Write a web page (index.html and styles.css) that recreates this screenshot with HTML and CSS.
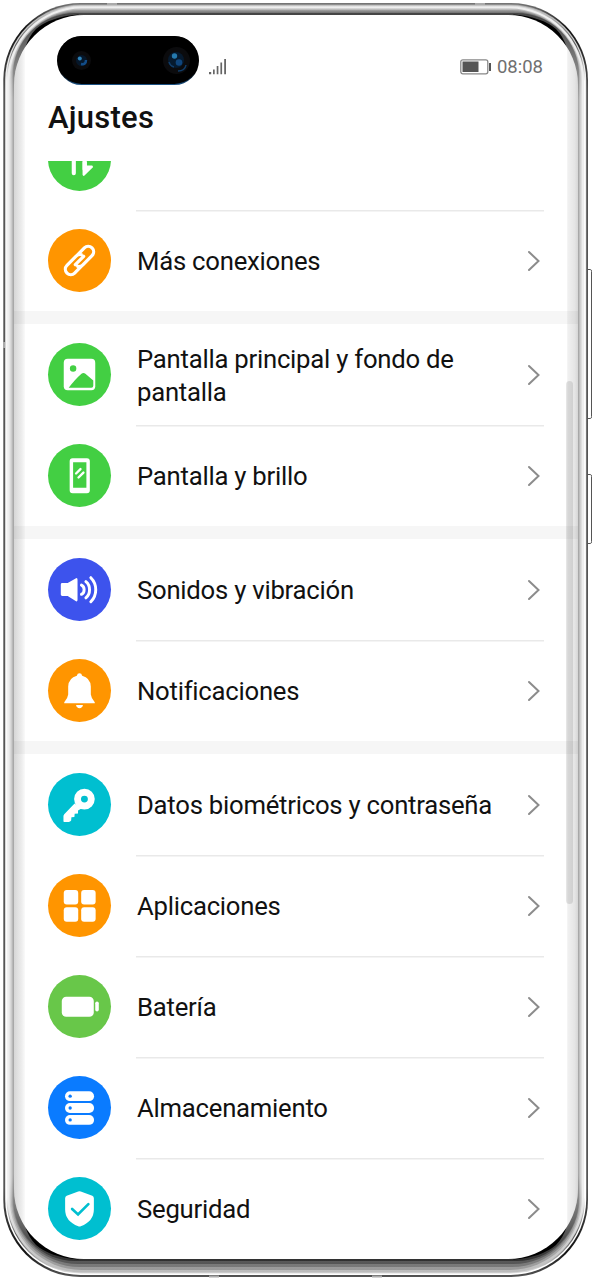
FILE: index.html
```html
<!DOCTYPE html>
<html lang="es">
<head>
<meta charset="utf-8">
<title>Ajustes</title>
<link rel="stylesheet" href="styles.css">
</head>
<body>
<main class="phone">
  <svg class="chassis" viewBox="0 0 592 1280" aria-hidden="true">
    <defs>
      <linearGradient id="m0" x2="0" y2="1"><stop offset="0" stop-color="#777"/><stop offset=".02" stop-color="#111"/><stop offset=".07" stop-color="#555"/><stop offset=".93" stop-color="#555"/><stop offset=".98" stop-color="#111"/><stop offset="1" stop-color="#555"/></linearGradient>
      <linearGradient id="m1" x2="0" y2="1"><stop offset="0" stop-color="#aaa"/><stop offset=".05" stop-color="#eee"/><stop offset=".96" stop-color="#fff"/><stop offset="1" stop-color="#fff"/></linearGradient>
      <linearGradient id="m2" x2="0" y2="1"><stop offset="0" stop-color="#ddd"/><stop offset=".03" stop-color="#555"/><stop offset=".06" stop-color="#fff"/><stop offset=".94" stop-color="#fff"/><stop offset=".97" stop-color="#555"/><stop offset="1" stop-color="#ddd"/></linearGradient>
      <linearGradient id="m3" x2="0" y2="1"><stop offset="0" stop-color="#eee"/><stop offset=".06" stop-color="#eee"/><stop offset=".94" stop-color="#eee"/><stop offset="1" stop-color="#bbb"/></linearGradient>
      <linearGradient id="m4" x2="0" y2="1"><stop offset="0" stop-color="#bbb"/><stop offset=".07" stop-color="#dedede"/><stop offset=".93" stop-color="#dedede"/><stop offset="1" stop-color="#999"/></linearGradient>
      <linearGradient id="m5" x2="0" y2="1"><stop offset="0" stop-color="#999"/><stop offset=".07" stop-color="#ccc"/><stop offset=".93" stop-color="#ccc"/><stop offset="1" stop-color="#777"/></linearGradient>
      <linearGradient id="m6" x2="0" y2="1"><stop offset="0" stop-color="#777"/><stop offset=".07" stop-color="#b8b8b8"/><stop offset=".93" stop-color="#b8b8b8"/><stop offset="1" stop-color="#555"/></linearGradient>
      <linearGradient id="m7" x2="0" y2="1"><stop offset="0" stop-color="#444"/><stop offset=".07" stop-color="#a8a8a8"/><stop offset=".93" stop-color="#a8a8a8"/><stop offset="1" stop-color="#303030"/></linearGradient>
    </defs>
    <g fill="#fff" stroke="#555"><path d="M587.5 269.5h3q1 0 1 2v145q0 2-1 2h-3zM587.5 474.500h3q1 0 1 2v65q0 2-1 2h-3z"/></g>
    <rect x="3.300" y="3" width="584.700" height="1274" rx="77" fill="url(#m0)"/>
    <rect x="5.200" y="4.500" width="581" height="1270.500" rx="75.500" fill="url(#m1)"/>
    <rect x="6.500" y="5.500" width="578.500" height="1268" rx="74.500" fill="url(#m2)"/>
    <rect x="7.200" y="6.500" width="577" height="1266" rx="74" fill="url(#m3)"/>
    <rect x="9.500" y="8.500" width="572.500" height="1261.500" rx="72" fill="url(#m4)"/>
    <rect x="10.800" y="10" width="570" height="1257" rx="69" fill="url(#m5)"/>
    <rect x="12" y="11.500" width="567.700" height="1252.500" rx="66" fill="url(#m6)"/>
    <rect x="13" y="13" width="566" height="1248" rx="62" fill="url(#m7)"/>
    <path fill="#000" d="M25 48Q29 36 36 29Q50 17 78 14.500L90 20L40 60ZM567 48Q563 36 556 29Q542 17 514 14.500L502 20L552 60ZM25 1226Q29 1238 36 1245Q50 1257 78 1259.500L90 1254L40 1214ZM567 1226Q563 1238 556 1245Q542 1257 514 1259.500L502 1254L552 1214Z"/>
    <path stroke="#aaa" stroke-width="2" d="M107 4h10M475 4h10M209 1276.500h10M372 1276.500h10M4 342v6"/>
  </svg>

  <section class="screen">
    <header class="header">
      <div class="status">
        <svg class="camera" width="142" height="49" viewBox="0 0 142 49">
          <defs><linearGradient id="cam" x2="0" y2="1"><stop offset=".75" stop-color="#000"/><stop offset="1" stop-color="#1c5488"/></linearGradient></defs>
          <rect width="142" height="49" rx="24.500" fill="url(#cam)"/><rect x=".7" y=".2" width="140.600" height="47.700" rx="23.800"/>
          <circle cx="24.500" cy="24.500" r="9.500" fill="#0b0b0d"/><circle cx="24.500" cy="24.500" r="5.500" fill="#06172a"/><circle cx="22.800" cy="22.500" r="2" fill="#2d82b8"/><path d="M24 28q5 1 5-4" fill="none" stroke="#124c88" stroke-width="2.500"/>
          <circle cx="119.500" cy="24.500" r="13.500" fill="#0b0b0d"/><circle cx="119" cy="24" r="8" fill="#061a2e"/><circle cx="117.500" cy="20" r="2.700" fill="#2579ad"/><circle cx="122" cy="26.500" r="3.300" fill="#0f457c"/><path d="M117 31q-4-1-5-5M121 35q7 0 8-6" fill="none" stroke="#103c68" stroke-width="1.500"/>
        </svg>
        <svg class="signal" width="20" height="18" viewBox="0 0 20 18" fill="#666"><path d="M1 14h2.200v2.300H1zM5 11.500h1.700v4.800H5zM8.700 8h1.700v8.300H8.700zM12.400 4.500h1.700v11.800h-1.700zM16.200 1H18v15.300h-1.800z"/></svg>
        <svg class="power" width="32" height="16" viewBox="0 0 32 16"><rect x=".8" y=".8" width="27" height="14" rx="2" fill="#fff" stroke="#888" stroke-width="1.300"/><path fill="#555" d="M2.500 2.500h16v10.500h-16zM29 4h2v8h-2z"/></svg>
        <time class="clock">08:08</time>
      </div>
      <h1 class="title">Ajustes</h1>
    </header>

    <div class="list">
      <div class="group group-first">
        <div class="row"><svg class="icon green" viewBox="0 0 64 64"><path d="M26.200 14V46M37.200 15V42" fill="none" stroke="#fff" stroke-width="4.200" stroke-linecap="round"/><path fill="#fff" d="M35.100 34v13.500q.5 1.800 2 .8l8.800-8.800-1-1.500h-5.400V34z"/></svg></div>
        <div class="row"><svg class="icon orange" viewBox="0 0 64 64"><g transform="rotate(-45 32 32)" fill="none" stroke="#fff" stroke-width="3.300" stroke-linecap="round"><path d="M30 37.500H19.500a5.500 5.500 0 0 1 0-11H33a5.500 5.500 0 0 1 4.500 2.500M34 26.500h10.500a5.500 5.500 0 0 1 0 11H31a5.500 5.500 0 0 1-4.500-2.500M26 32H38"/></g></svg><span class="label">Más conexiones</span><svg class="arrow" viewBox="0 0 14 22"><path d="M2 2l9.500 9L2 20"/></svg></div>
      </div>
      <div class="group">
        <div class="row"><svg class="icon green" viewBox="0 0 64 64"><rect x="16" y="16" width="32" height="32" rx="4" fill="#fff"/><circle cx="25.500" cy="25.800" r="3.300" fill="#43cf43"/><path fill="#43cf43" d="M21 45.500Q28 36.500 34 31.300Q36 29.500 38 31.300L46 38v5.500q0 2-2 2z"/></svg><span class="label">Pantalla principal y fondo de pantalla</span><svg class="arrow" viewBox="0 0 14 22"><path d="M2 2l9.500 9L2 20"/></svg></div>
        <div class="row"><svg class="icon green" viewBox="0 0 64 64"><path fill="#fff" fill-rule="evenodd" d="M25 14.500H39.500a3 3 0 0 1 3 3V47a3 3 0 0 1-3 3H25a3 3 0 0 1-3-3V17.500a3 3 0 0 1 3-3zM25.500 18.500V44.500H39V18.500z"/><path d="M28.500 30l4.500-4.500M31 34l5-5" stroke="#fff" stroke-width="2.400" stroke-linecap="round"/></svg><span class="label">Pantalla y brillo</span><svg class="arrow" viewBox="0 0 14 22"><path d="M2 2l9.500 9L2 20"/></svg></div>
      </div>
      <div class="group">
        <div class="row"><svg class="icon indigo" viewBox="0 0 64 64"><path fill="#fff" d="M13 27q0-1.500 1.500-1.500H20L28.500 20.500Q30 20 30 22V42.500Q30 44.500 28.500 44L20 38.500H14.500Q13 38.500 13 37z"/><path d="M34 27.500q2.700 1.200 2.700 4.700t-2.700 4.700M38.500 24q3.700 3 3.700 8.200t-3.700 8.300M43.500 20q5 5 5 12.200t-5 12.300" fill="none" stroke="#fff" stroke-width="3" stroke-linecap="round"/></svg><span class="label">Sonidos y vibración</span><svg class="arrow" viewBox="0 0 14 22"><path d="M2 2l9.500 9L2 20"/></svg></div>
        <div class="row"><svg class="icon orange" viewBox="0 0 64 64"><path fill="#fff" d="M32 14.500q2.200 0 2.700 2.500Q43 19 43.500 28V36Q44 40 47.500 44V45H16.500V44Q20 40 20.500 36V28Q21 19 29.300 17 29.800 14.500 32 14.500zM28.500 46.800h7q-.6 3.200-3.500 3.200t-3.500-3.200z"/></svg><span class="label">Notificaciones</span><svg class="arrow" viewBox="0 0 14 22"><path d="M2 2l9.500 9L2 20"/></svg></div>
      </div>
      <div class="group">
        <div class="row"><svg class="icon cyan" viewBox="0 0 64 64"><circle cx="37" cy="26.500" r="7" fill="none" stroke="#fff" stroke-width="7"/><path fill="#fff" d="M27 31L16.500 42q-.8.800-.8 2V49q0 .7.700.7H21q1.500 0 2.500-1.500l.3-3.200 3-.3.300-3.200 3.400-.4V38l3.500-2z"/></svg><span class="label">Datos biométricos y contraseña</span><svg class="arrow" viewBox="0 0 14 22"><path d="M2 2l9.500 9L2 20"/></svg></div>
        <div class="row"><svg class="icon orange" viewBox="0 0 64 64" fill="#fff"><rect x="16" y="16.200" width="14.700" height="14.700" rx="3"/><rect x="33.700" y="16.200" width="14.700" height="14.700" rx="3"/><rect x="16" y="33.800" width="14.700" height="14.700" rx="3"/><rect x="33.700" y="33.800" width="14.700" height="14.700" rx="3"/></svg><span class="label">Aplicaciones</span><svg class="arrow" viewBox="0 0 14 22"><path d="M2 2l9.500 9L2 20"/></svg></div>
        <div class="row"><svg class="icon lime" viewBox="0 0 64 64" fill="#fff"><rect x="14" y="22" width="32.500" height="20.500" rx="4.500"/><rect x="48" y="27" width="3.600" height="10" rx="1.800"/></svg><span class="label">Batería</span><svg class="arrow" viewBox="0 0 14 22"><path d="M2 2l9.500 9L2 20"/></svg></div>
        <div class="row"><svg class="icon blue" viewBox="0 0 64 64"><g fill="#fff"><rect x="17.300" y="15.500" width="29.500" height="10" rx="5"/><rect x="17.300" y="27.500" width="29.500" height="10" rx="5"/><rect x="17.300" y="39.600" width="29.500" height="10" rx="5"/></g><g fill="#0a7bff"><circle cx="22.500" cy="20.500" r="1.700"/><circle cx="22.500" cy="32.500" r="1.700"/><circle cx="22.500" cy="44.600" r="1.700"/></g></svg><span class="label">Almacenamiento</span><svg class="arrow" viewBox="0 0 14 22"><path d="M2 2l9.500 9L2 20"/></svg></div>
        <div class="row"><svg class="icon cyan" viewBox="0 0 64 64"><path fill="#fff" d="M30.700 14.700q1.300-.6 2.600 0L45 19q1.600.7 1.600 2.500V33q0 12-13.300 17-1.300.5-2.600 0Q17.400 45 17.400 33V21.500q0-1.800 1.600-2.500z"/><path d="M24.500 32.500l6 5.500L41 27.500" fill="none" stroke="#00bfd0" stroke-width="2.700" stroke-linecap="round"/></svg><span class="label">Seguridad</span><svg class="arrow" viewBox="0 0 14 22"><path d="M2 2l9.500 9L2 20"/></svg></div>
      </div>
    </div>
    <div class="edge edge-left"></div>
    <div class="edge edge-right"></div>
    <div class="scrollbar"></div>
  </section>
</main>
</body>
</html>
```
FILE: styles.css
```css
* { box-sizing: border-box; }
body { margin: 0; background: #fff; font-family: Roboto, sans-serif; color: #111; }
.phone { position: relative; width: 592px; height: 1280px; padding: 15px 14px 21px; overflow: hidden; }
.chassis { position: absolute; inset: 0; width: 592px; height: 1280px; }
.screen { position: relative; width: 564px; height: 1244px; border-radius: 70px; overflow: hidden; background: #fff; display: flex; flex-direction: column; }
.header { height: 146px; flex: none; padding: 21px 35px 0 34px; }
.status { display: flex; align-items: center; height: 49px; padding-left: 9px; }
.camera { margin-right: -1px; }
.signal { margin: 12px 0 0 10px; }
.power { margin: 12px 0 0 auto; }
.clock { margin: 12px 0 0 5px; font-size: 18.500px; line-height: 22px; color: #707070; }
.title { margin: 15px 0 0 0; font-size: 31px; line-height: 36px; font-weight: 500; letter-spacing: .25px; }
.list { flex: 1; min-height: 0; overflow: hidden; }
.group { border-bottom: 13px solid #f6f6f6; }
.group:last-child { border-bottom: 0; }
.group-first { margin-top: -52px; }
.row { display: grid; grid-template-columns: 63px 366px 14px; column-gap: 25px; align-items: center; height: 101px; padding-left: 34px; }
.row + .row { background: linear-gradient(#e9e9e9, #e9e9e9) 122px 0 / 408px 1.500px no-repeat; }
.icon { width: 63px; height: 63px; border-radius: 50%; margin-top: -1px; }
.green { background: #43cf43; }
.orange { background: #ff9500; }
.indigo { background: #3d53ed; }
.cyan { background: #00bfd0; }
.lime { background: #68c749; }
.blue { background: #0a7bff; }
.label { padding: 2px 0 0 1px; font-size: 25.700px; line-height: 33px; letter-spacing: -.24px; }
.arrow { width: 14px; height: 22px; fill: none; stroke: #8c8c8c; stroke-width: 2; stroke-linecap: round; }
.edge { position: absolute; top: 0; bottom: 0; width: 11px; }
.edge-left { left: 0; background: linear-gradient(90deg, rgba(0,0,0,.16), rgba(0,0,0,.07) 70%, rgba(0,0,0,.02)); }
.edge-right { right: 0; background: linear-gradient(270deg, rgba(0,0,0,.16), rgba(0,0,0,.1) 30%, rgba(0,0,0,.06) 90%, rgba(0,0,0,.03)); }
.scrollbar { position: absolute; left: 552px; top: 366px; width: 7px; height: 523px; border-radius: 4px; background: rgba(0,0,0,.1); }
```
